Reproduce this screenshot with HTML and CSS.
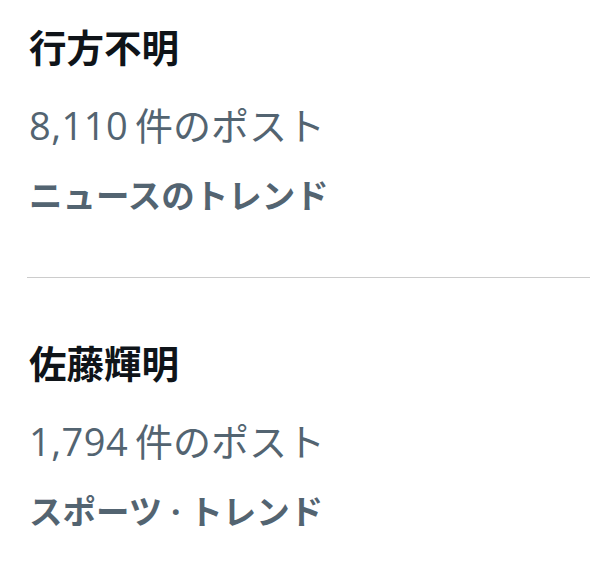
FILE: index.html
```html
<!DOCTYPE html>
<html lang="ja">
<head>
<meta charset="utf-8">
<link rel="stylesheet" href="styles.css">
</head>
<body>
<div class="trends">
  <div class="trend">
    <div class="title">行方不明</div>
    <div class="count"><span class="num">8,110</span> 件のポスト</div>
    <div class="category">ニュースのトレンド</div>
  </div>
  <div class="trend">
    <div class="title">佐藤輝明</div>
    <div class="count"><span class="num">1,794</span> 件のポスト</div>
    <div class="category">スポーツ · トレンド</div>
  </div>
</div>
</body>
</html>
```
FILE: styles.css
```css
html, body {
  margin: 0;
  padding: 0;
  background: #ffffff;
}
body {
  font-family: "Open Sans", "Noto Sans CJK JP", sans-serif;
}
.trends {
  padding-left: 27px;
}
.trend {
  padding: 48px 0 47px 0;
}
.trend:first-child {
  padding-top: 10px;
}
.trend + .trend {
  border-top: 1px solid #cccccc;
}
.title {
  font-size: 37.5px;
  font-weight: 700;
  line-height: 76px;
  padding-bottom: 4px;
  color: #0f1419;
  padding-left: 2px;
}
.count {
  font-size: 38px;
  line-height: 70px;
  color: #536471;
  padding-left: 2px;
  word-spacing: -3px;
}
.num {
  letter-spacing: 0.5px;
}
.category {
  font-size: 33.5px;
  font-weight: 700;
  line-height: 70px;
  color: #536471;
  padding-left: 2px;
}
```
